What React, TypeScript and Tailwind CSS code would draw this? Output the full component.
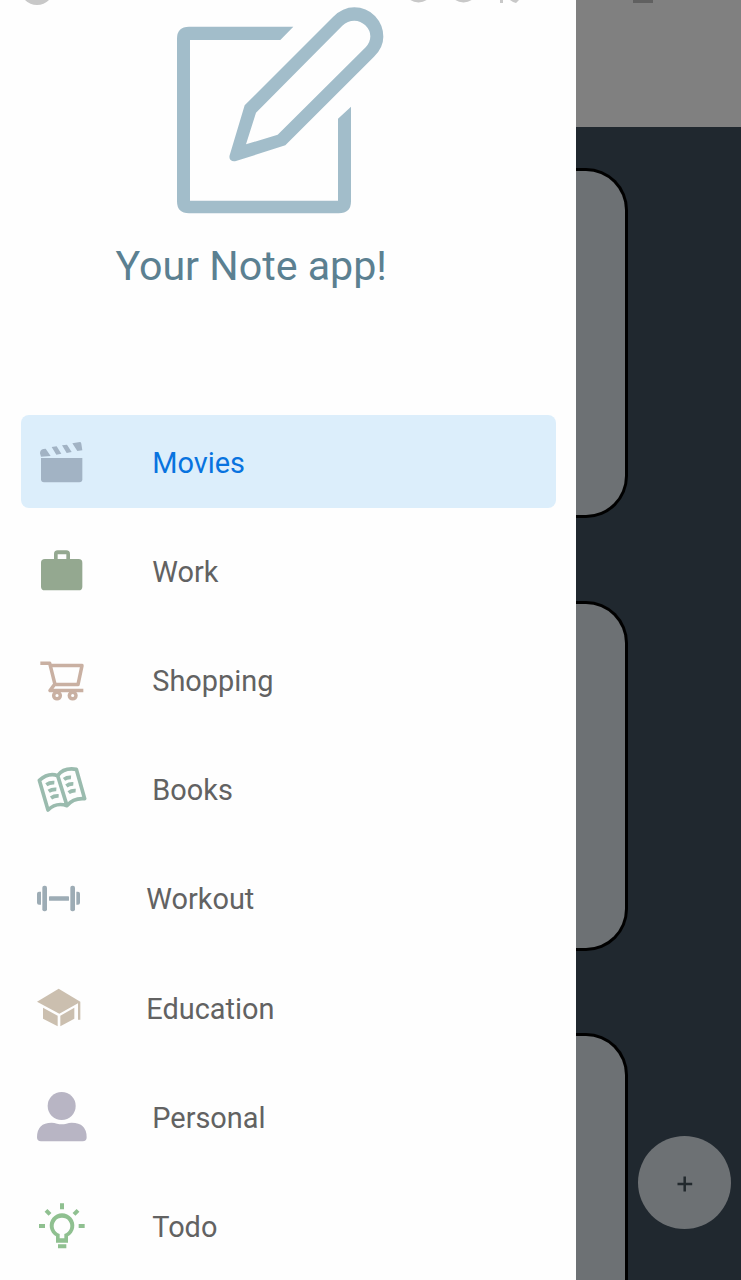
import type { ReactNode } from "react";

type Item = { label: string; color: string; viewBox: string; narrow?: boolean; icon: ReactNode };

const items: Item[] = [
  {
    label: "Movies",
    color: "text-[#a2b3c4]",
    viewBox: "33 66 180 180",
    icon: (
      <g fill="currentColor">
        <path d="M63 144H187V208Q187 217 178 217H72Q63 217 63 208Z" />
        <path d="M63 140L60 130Q60 119 70 117L77 116L92 138ZM95 111L110 109L124 131L109 134ZM126 106L141 104L155 126L140 129ZM157 100L180 96Q184 96 184 101L187 121L172 123Z" />
      </g>
    ),
  },
  {
    label: "Work",
    color: "text-[#94a890]",
    viewBox: "18 17 180 180",
    icon: (
      <path
        fill="currentColor"
        fillRule="evenodd"
        d="M87 71V56Q87 45 98 45H124Q135 45 135 56V71H161Q172 71 172 82V154Q172 165 161 165H60Q48 165 48 154V82Q48 71 60 71ZM98 71H124V57H98Z"
      />
    ),
  },
  {
    label: "Shopping",
    color: "text-[#c9b0a2]",
    viewBox: "17 15.4 180 180",
    icon: (
      <g fill="none" stroke="currentColor" strokeWidth="10.5" strokeLinejoin="round">
        <path d="M45 55H73L89 119H158L170 62H76M88 118L74 137H174" />
        <circle cx="95" cy="152" r="10" />
        <circle cx="142" cy="152" r="10" />
      </g>
    ),
  },
  {
    label: "Books",
    color: "text-[#9abbae]",
    viewBox: "18 12 180 180",
    icon: (
      <g fill="none" stroke="currentColor" strokeWidth="11" strokeLinejoin="round">
        <path d="M98 62Q70 52 43 76L69 165Q93 141 126 152Q145 128 179 131L154 43Q116 37 98 62L126 152" />
        <path d="M64 89Q74 82 88 83M71 109Q81 102 94 103M78 129Q88 122 101 123M117 73Q126 66 138 67M124 93Q133 86 145 87M131 113Q140 106 152 107" />
      </g>
    ),
  },
  {
    label: "Workout",
    color: "text-[#9dacb5]",
    viewBox: "18 8.500 180 180",
    narrow: true,
    icon: (
      <g fill="currentColor">
        <rect x="52" y="62" width="14" height="76" rx="6" />
        <rect x="136" y="62" width="14" height="76" rx="6" />
        <rect x="72" y="93" width="60" height="14" rx="2" />
        <path d="M48 80V119H42Q36 119 36 113V86Q36 80 42 80ZM154 80V119H159Q165 119 165 113V86Q165 80 159 80Z" />
      </g>
    ),
  },
  {
    label: "Education",
    color: "text-[#cbbfaf]",
    viewBox: "18 12 180 180",
    narrow: true,
    icon: (
      <g fill="currentColor">
        <path d="M36 86L101 47L166 86V140H159V91L103 122Z" />
        <path d="M54 104L98 128V160L54 137ZM106 128L148 104V137L106 160Z" />
      </g>
    ),
  },
  {
    label: "Personal",
    color: "text-[#b8b5c4]",
    viewBox: "18 18 180 180",
    icon: (
      <g fill="currentColor">
        <circle cx="110" cy="78" r="42" />
        <path d="M36 172Q36 128 80 128Q88 128 96 131Q110 135 124 131Q132 128 140 128Q185 128 185 172Q185 184 173 184H48Q36 184 36 172Z" />
      </g>
    ),
  },
  {
    label: "Todo",
    color: "text-[#8fc090]",
    viewBox: "18 17 180 180",
    icon: (
      <g>
        <path
          fill="currentColor"
          fillRule="evenodd"
          d="M93 157V138A37 37 0 1 1 129 138V157ZM104 144H118V131A25 25 0 1 0 104 131Z"
        />
        <path
          fill="none"
          stroke="currentColor"
          strokeWidth="12"
          d="M99 168H124M111 57V39M42 107H60M161 107H179M75 72L63 60M147 72L159 60"
        />
      </g>
    ),
  },
];

function NoteLogo() {
  return (
    <svg className="ml-[160px] block h-[230px] w-[240px]" viewBox="0 -1 720 690" fill="#a2bdca">
      <path d="M400 79H87Q51 79 51 115V603Q51 639 87 639H536Q573 639 573 603V319L534 355V601H90V119H361Z" />
      <path
        fillRule="evenodd"
        d="M254 315L519 50Q548 21 583 21Q619 21 645 47Q670 74 670 109Q670 142 642 169L376 435L228 482Q218 485 211 478Q207 473 209 465ZM288 337L547 76Q563 61 583 61Q602 61 616 75Q631 90 631 108Q631 126 617 141L353 403L258 432Z"
      />
    </svg>
  );
}

function StatusRemnants() {
  return (
    <svg className="absolute left-0 top-0 h-[8px] w-[741px]" viewBox="0 0 741 8">
      <g fill="#c8c8c8">
        <circle cx="37" cy="-12" r="17" />
        <circle cx="418.500" cy="-12" r="14.500" />
        <circle cx="463.500" cy="-12" r="14.500" />
        <path d="M500 0H503V3H500ZM510 0H519L516 3L513 2Z" />
      </g>
      <path d="M633 0H653V3H633Z" fill="#606060" />
    </svg>
  );
}

export default function App() {
  return (
    <div className="relative flex h-[1280px] w-[741px] overflow-hidden bg-[#20282f] font-['Roboto',sans-serif]">
      <aside className="flex w-[576px] shrink-0 flex-col bg-[#fefefe]">
        <NoteLogo />
        <h1 className="ml-[115.500px] mt-[12px] h-[48px] whitespace-nowrap text-[41.200px] leading-[48px] text-[#5b8091]">
          Your Note app!
        </h1>
        <nav className="ml-[20.500px] mt-[125px] flex w-[535.500px] flex-col gap-[16.170px]">
          {items.map((item, i) => (
            <a
              key={item.label}
              className={`flex h-[93px] shrink-0 items-center rounded-[8px] pl-[10.500px] text-[28.900px] ${i === 0 ? "bg-[#dceefb] text-[#0873df]" : "text-[#626262]"}`}
            >
              <svg className={`size-[60px] shrink-0 ${item.color}`} viewBox={item.viewBox}>
                {item.icon}
              </svg>
              <span className={`${item.narrow ? "ml-[55.300px]" : "ml-[61.300px]"} mt-[2.500px] leading-[36px]`}>
                {item.label}
              </span>
            </a>
          ))}
        </nav>
      </aside>
      <main className="flex min-w-0 flex-1 flex-col overflow-hidden">
        <header className="h-[127px] shrink-0 bg-[#808080]" />
        <section className="flex flex-col gap-[82.500px] pt-[41px]">
          {[0, 1, 2].map((n) => (
            <article
              key={n}
              className="h-[350px] w-[52px] shrink-0 rounded-r-[42px] border-y-3 border-r-3 border-black bg-[#6d7174]"
            />
          ))}
        </section>
      </main>
      <button className="absolute left-[638px] top-[1135.500px] flex size-[93px] items-center justify-center rounded-full bg-[#6d7174]">
        <svg className="mt-[3px] size-[16px]" viewBox="0 0 16 16" stroke="#22292d" strokeWidth="2.500">
          <path d="M7.700 0.500V15.500M0.500 8H15.200" />
        </svg>
      </button>
      <StatusRemnants />
    </div>
  );
}
